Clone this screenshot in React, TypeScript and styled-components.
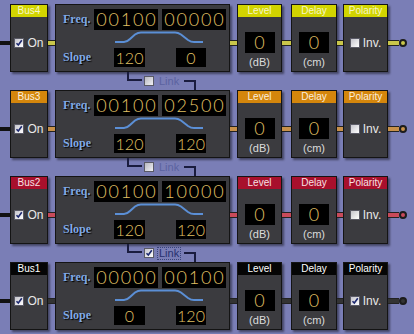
import React from 'react';
import styled, { createGlobalStyle } from 'styled-components';

const GlobalStyle = createGlobalStyle`
  html, body {
    margin: 0;
    padding: 0;
    background: #7a7eb6;
  }
  body {
    font-family: "Liberation Sans", Arial, sans-serif;
  }
`;

type Tone = { head: string; text: string; wire: string };

const tones: Record<string, Tone> = {
  yellow: { head: '#d2d400', text: '#f6f6c8', wire: '#c9c64a' },
  orange: { head: '#d4860c', text: '#fbeedc', wire: '#c8914a' },
  red: { head: '#a8102c', text: '#f8e0e4', wire: '#c84a5a' },
  black: { head: '#050505', text: '#ffffff', wire: '#333333' },
};

const Page = styled.div`
  width: 414px;
  height: 334px;
  overflow: hidden;
  padding-top: 4px;
  box-sizing: border-box;
`;

const Row = styled.div`
  display: flex;
  align-items: flex-start;
  height: 68px;
`;

const InWire = styled.div`
  width: 10px;
  height: 4px;
  margin-top: 37px;
  background: #111;
  flex-shrink: 0;
`;

const Wire = styled.div<{ $color: string; $w: number }>`
  width: ${p => p.$w}px;
  height: 4px;
  margin-top: 36px;
  background: ${p => p.$color};
  border-top: 1px solid #222;
  border-bottom: 1px solid #222;
  flex-shrink: 0;
`;

const Terminal = styled.div<{ $color: string }>`
  width: 8px;
  height: 8px;
  margin-top: 35px;
  box-sizing: border-box;
  border-radius: 50%;
  border: 2px solid #1c1c1c;
  background: ${p => p.$color};
  flex-shrink: 0;
`;

const Box = styled.div<{ $w: number }>`
  width: ${p => p.$w}px;
  height: 68px;
  box-sizing: border-box;
  background: #3b3b3f;
  border: 1px solid #141414;
  box-shadow: 2px 2px 2px rgba(0, 0, 0, 0.45);
  display: flex;
  flex-direction: column;
  flex-shrink: 0;
`;

const Header = styled.div<{ $tone: Tone }>`
  height: 12px;
  line-height: 12px;
  background: ${p => p.$tone.head};
  color: ${p => p.$tone.text};
  font-size: 10px;
  text-align: center;
  white-space: nowrap;
`;

const CenterBody = styled.div`
  flex: 1;
  display: flex;
  align-items: center;
  justify-content: center;
  gap: 3px;
  padding-bottom: 2px;
`;

const ValueBody = styled.div`
  flex: 1;
  display: flex;
  flex-direction: column;
  align-items: center;
  padding-top: 15px;
`;

const Caption = styled.span`
  color: #e8e8e8;
  font-size: 12px;
  white-space: nowrap;
`;

const Unit = styled.span`
  margin-top: 3px;
  color: #dcdcdc;
  font-size: 11px;
  line-height: 12px;
`;

const Display = styled.div<{ $w: number; $h: number; $size?: number; $spacing?: number }>`
  width: ${p => p.$w}px;
  height: ${p => p.$h}px;
  background: #000;
  color: #e0c064;
  font-family: Lato, "Liberation Sans", sans-serif;
  font-weight: 300;
  font-size: ${p => p.$size ?? 18}px;
  font-variant-numeric: tabular-nums;
  line-height: ${p => p.$h}px;
  letter-spacing: ${p => p.$spacing ?? 0}px;
  text-indent: ${p => p.$spacing ?? 0}px;
  text-align: center;
  white-space: nowrap;
  flex-shrink: 0;
`;

const FilterBox = styled(Box)`
  padding-top: 3px;
`;

const LineRow = styled.div<{ $h: number }>`
  display: flex;
  align-items: center;
  height: ${p => p.$h}px;
`;

const Label = styled.span<{ $w: number }>`
  width: ${p => p.$w}px;
  box-sizing: border-box;
  padding-left: 7px;
  color: #80aae6;
  font-family: "Liberation Serif", "Times New Roman", serif;
  font-weight: bold;
  font-size: 12px;
  text-shadow: 1px 1px 1px #000;
  flex-shrink: 0;
`;

const Spacer = styled.div<{ $w: number }>`
  width: ${p => p.$w}px;
  flex-shrink: 0;
`;

const Curve = styled.svg`
  margin-left: 57px;
  display: block;
`;

const Check = styled.span<{ $dim?: boolean }>`
  position: relative;
  width: 10px;
  height: 10px;
  box-sizing: border-box;
  border: 1px solid #5a5a66;
  background: ${p =>
    p.$dim
      ? 'linear-gradient(135deg, #b8b8c0, #f0f0f4)'
      : 'linear-gradient(135deg, #c4c4cc, #ffffff)'};
  flex-shrink: 0;
  svg {
    position: absolute;
    left: 0;
    top: 0;
  }
`;

const LinkRow = styled.div`
  height: 18px;
  display: flex;
  align-items: center;
  padding-left: 127px;
`;

const BracketUp = styled.div`
  align-self: flex-start;
  width: 15px;
  height: 9px;
  box-sizing: border-box;
  border-left: 2px solid #1a1c3e;
  border-bottom: 2px solid #1a1c3e;
  margin-right: 2px;
`;

const BracketDown = styled.div`
  align-self: flex-end;
  width: 12px;
  height: 10px;
  box-sizing: border-box;
  border-top: 2px solid #1a1c3e;
  border-right: 2px solid #1a1c3e;
  margin-left: 3px;
`;

const LinkText = styled.span<{ $on: boolean }>`
  margin-left: 3px;
  font-size: 11px;
  line-height: 11px;
  padding: 0 1px;
  color: ${p => (p.$on ? '#26306e' : '#5a62a0')};
  border: 1px dotted ${p => (p.$on ? '#3a447a' : 'transparent')};
`;

const Tick = () => (
  <svg width="8" height="8" viewBox="0 0 8 8">
    <path d="M1.5 4.2 L3.3 6 L6.8 1.2" fill="none" stroke="#1e2a70" strokeWidth="1.6" />
  </svg>
);

const CheckBox: React.FC<{ on: boolean; dim?: boolean }> = ({ on, dim }) => (
  <Check $dim={dim}>{on && <Tick />}</Check>
);

type BusRow = {
  bus: string;
  tone: Tone;
  f1: string;
  f2: string;
  s1: string;
  s2: string;
  inv: boolean;
};

const rows: BusRow[] = [
  { bus: 'Bus4', tone: tones.yellow, f1: '00100', f2: '00000', s1: '120', s2: '0', inv: false },
  { bus: 'Bus3', tone: tones.orange, f1: '00100', f2: '02500', s1: '120', s2: '120', inv: false },
  { bus: 'Bus2', tone: tones.red, f1: '00100', f2: '10000', s1: '120', s2: '120', inv: false },
  { bus: 'Bus1', tone: tones.black, f1: '00000', f2: '00100', s1: '0', s2: '120', inv: true },
];

const links = [false, false, true];

const Strip: React.FC<{ row: BusRow }> = ({ row }) => {
  const { tone } = row;
  return (
    <Row>
      <InWire />
      <Box $w={38}>
        <Header $tone={tone}>{row.bus}</Header>
        <CenterBody>
          <CheckBox on />
          <Caption>On</Caption>
        </CenterBody>
      </Box>
      <Wire $color={tone.wire} $w={7} />
      <FilterBox $w={175}>
        <LineRow $h={22}>
          <Label $w={38}>Freq.</Label>
          <Display $w={64} $h={21} $spacing={1.8}>{row.f1}</Display>
          <Spacer $w={4} />
          <Display $w={64} $h={21} $spacing={1.8}>{row.f2}</Display>
        </LineRow>
        <LineRow $h={18}>
          <Curve width="92" height="16" viewBox="0 0 92 16">
            <path
              d="M2 11 L11 11 Q14 11 17 8 L22 3.5 Q25 1.5 28 1.5 L62 1.5 Q65 1.5 68 3.5 L75 9 Q78 11 81 11 L90 11"
              fill="none"
              stroke="#5b8fd6"
              strokeWidth="2"
            />
          </Curve>
        </LineRow>
        <LineRow $h={19}>
          <Label $w={58}>Slope</Label>
          <Display $w={31} $h={19} $size={16}>{row.s1}</Display>
          <Spacer $w={31} />
          <Display $w={30} $h={19} $size={16}>{row.s2}</Display>
        </LineRow>
      </FilterBox>
      <Wire $color={tone.wire} $w={7} />
      <Box $w={45}>
        <Header $tone={tone}>Level</Header>
        <ValueBody>
          <Display $w={30} $h={21}>0</Display>
          <Unit>(dB)</Unit>
        </ValueBody>
      </Box>
      <Wire $color={tone.wire} $w={9} />
      <Box $w={46}>
        <Header $tone={tone}>Delay</Header>
        <ValueBody>
          <Display $w={30} $h={21}>0</Display>
          <Unit>(cm)</Unit>
        </ValueBody>
      </Box>
      <Wire $color={tone.wire} $w={6} />
      <Box $w={45}>
        <Header $tone={tone}>Polarity</Header>
        <CenterBody>
          <CheckBox on={row.inv} />
          <Caption>Inv.</Caption>
        </CenterBody>
      </Box>
      <Wire $color={tone.wire} $w={11} />
      <Terminal $color={tone.wire} />
    </Row>
  );
};

const Link: React.FC<{ on: boolean }> = ({ on }) => (
  <LinkRow>
    <BracketUp />
    <CheckBox on={on} dim={!on} />
    <LinkText $on={on}>Link</LinkText>
    <BracketDown />
  </LinkRow>
);

export default function App() {
  return (
    <Page>
      <GlobalStyle />
      {rows.map((row, i) => (
        <React.Fragment key={row.bus}>
          <Strip row={row} />
          {i < links.length && <Link on={links[i]} />}
        </React.Fragment>
      ))}
    </Page>
  );
}
